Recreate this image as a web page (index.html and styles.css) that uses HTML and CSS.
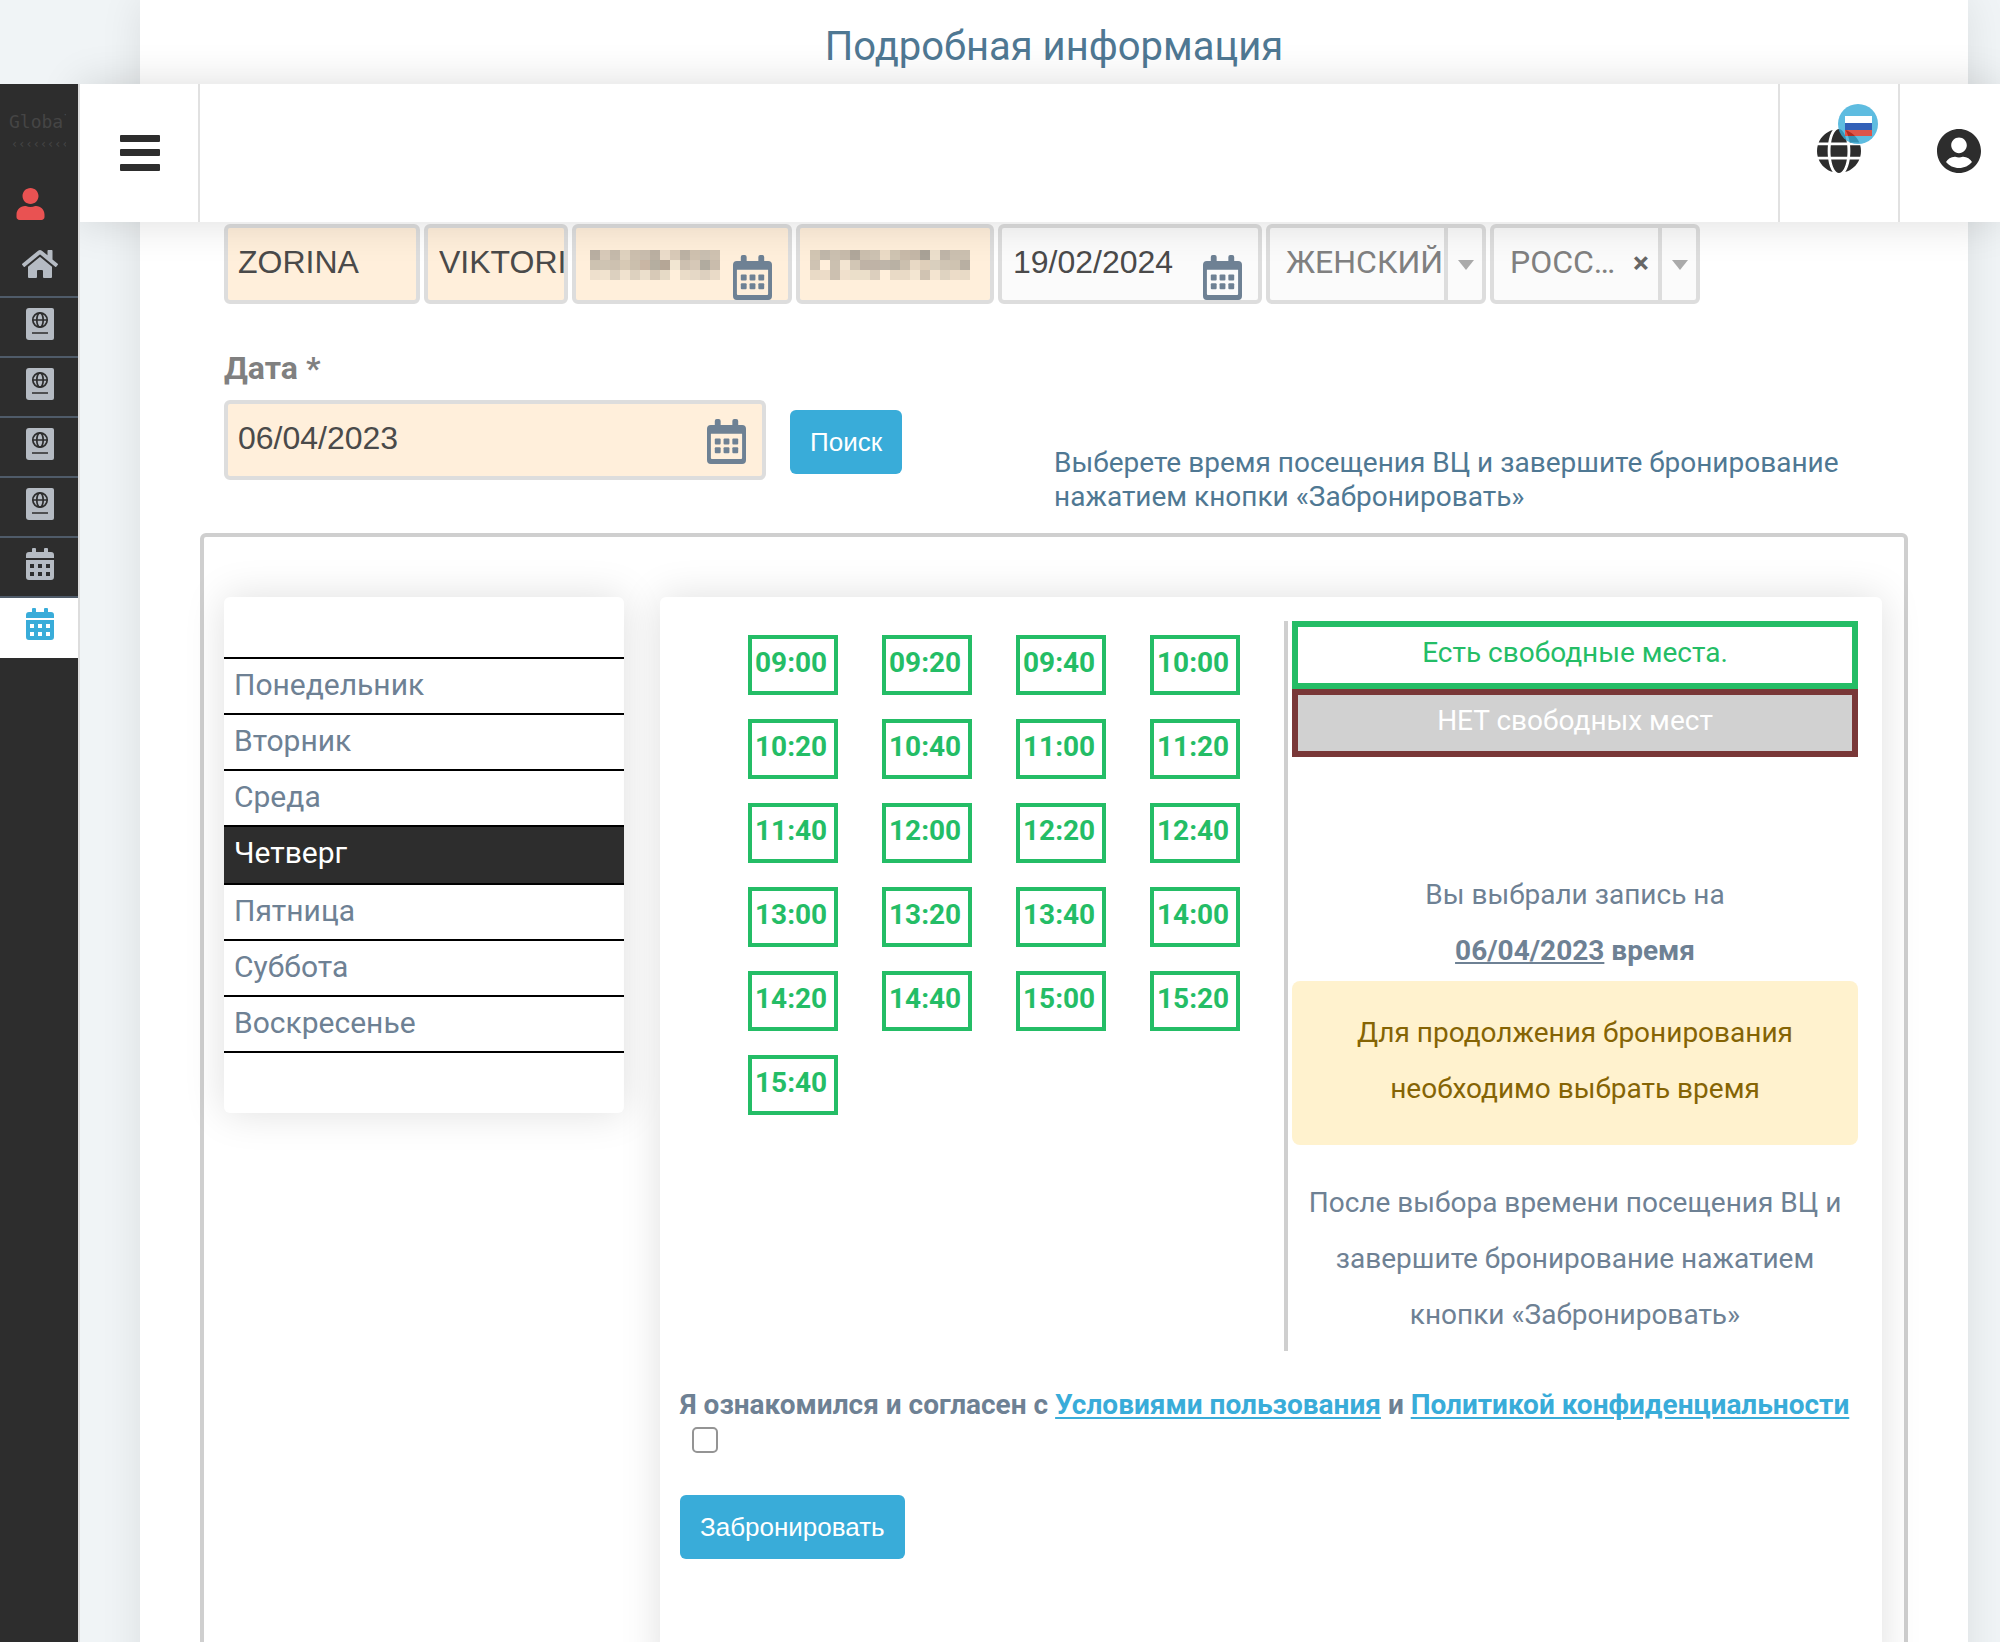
FILE: index.html
```html
<!DOCTYPE html>
<html lang="ru">
<head>
<meta charset="utf-8">
<title>Подробная информация</title>
<meta name="viewport" content="width=device-width, initial-scale=1">
<link rel="stylesheet" href="styles.css">
</head>
<body>
<svg class="sprite" aria-hidden="true">
  <symbol id="passport" viewBox="0 0 28 32">
    <path fill="currentColor" d="M3 0h23a2 2 0 0 1 2 2v28a2 2 0 0 1-2 2H3a3 3 0 0 1-3-3V3a3 3 0 0 1 3-3z"/>
    <g fill="none" stroke="#2d2d2d" stroke-width="1.7"><circle cx="14" cy="12" r="7.2"/><ellipse cx="14" cy="12" rx="3.2" ry="7.2"/><path d="M7 12h14M6 25h16"/></g>
  </symbol>
  <symbol id="calendar" viewBox="0 0 28 32">
    <path fill="currentColor" fill-rule="evenodd" d="M0 10V7a3 3 0 0 1 3-3h3V1a1 1 0 0 1 1-1h2a1 1 0 0 1 1 1v3h8V1a1 1 0 0 1 1-1h2a1 1 0 0 1 1 1v3h3a3 3 0 0 1 3 3v3zM0 12h28v17a3 3 0 0 1-3 3H3a3 3 0 0 1-3-3zM4 16v4h4v-4zM12 16v4h4v-4zM20 16v4h4v-4zM4 24v4h4v-4zM12 24v4h4v-4zM20 24v4h4v-4z"/>
  </symbol>
  <symbol id="picker" viewBox="0 0 40 46">
    <path fill="currentColor" fill-rule="evenodd" d="M4 6h4V2a2 2 0 0 1 2-2h2a2 2 0 0 1 2 2v4h12V2a2 2 0 0 1 2-2h2a2 2 0 0 1 2 2v4h4a4 4 0 0 1 4 4v32a4 4 0 0 1-4 4H4a4 4 0 0 1-4-4V10a4 4 0 0 1 4-4zM4 15v25a1 1 0 0 0 1 1h30a1 1 0 0 0 1-1V15z"/>
    <g fill="currentColor"><rect x="8" y="20" width="6" height="6" rx="1"/><rect x="17" y="20" width="6" height="6" rx="1"/><rect x="26" y="20" width="6" height="6" rx="1"/><rect x="8" y="29" width="6" height="6" rx="1"/><rect x="17" y="29" width="6" height="6" rx="1"/><rect x="26" y="29" width="6" height="6" rx="1"/></g>
  </symbol>
</svg>

<div class="shell">
  <main class="card">
    <h1 class="title">Подробная информация</h1>

    <form class="body">
      <div class="fields">
        <input class="input filled" aria-label="Фамилия" value="ZORINA">
        <input class="input filled inset" aria-label="Имя" value="VIKTORIIA">
        <div class="control">
          <input class="input filled" aria-label="Дата рождения">
          <span class="hidden-date"></span>
          <svg class="pick"><use href="#picker"/></svg>
        </div>
        <div class="control">
          <input class="input filled" aria-label="Номер паспорта">
          <span class="hidden-number"></span>
        </div>
        <div class="control">
          <input class="input inset" aria-label="Срок действия" value="19/02/2024">
          <svg class="pick"><use href="#picker"/></svg>
        </div>
        <div class="control">
          <select class="input select" aria-label="Пол"><option>ЖЕНСКИЙ</option></select>
          <span class="arrow"></span>
        </div>
        <div class="control">
          <select class="input select" aria-label="Гражданство"><option>РОСС…</option></select>
          <button class="clear" type="button" aria-label="Очистить">×</button>
          <span class="arrow"></span>
        </div>
      </div>

      <div class="search">
        <div class="date">
          <label class="date-label" for="date">Дата *</label>
          <div class="control">
            <input class="input filled" id="date" value="06/04/2023">
            <svg class="pick centered"><use href="#picker"/></svg>
          </div>
        </div>
        <button class="button search-button" type="button">Поиск</button>
        <p class="hint">Выберете время посещения ВЦ и завершите бронирование нажатием кнопки «Забронировать»</p>
      </div>

      <section class="schedule">
        <ul class="days">
          <li>Понедельник</li>
          <li>Вторник</li>
          <li>Среда</li>
          <li class="active">Четверг</li>
          <li>Пятница</li>
          <li>Суббота</li>
          <li>Воскресенье</li>
        </ul>

        <div class="panel">
          <div class="booking">
            <div class="slots">
              <button type="button">09:00</button><button type="button">09:20</button><button type="button">09:40</button><button type="button">10:00</button>
              <button type="button">10:20</button><button type="button">10:40</button><button type="button">11:00</button><button type="button">11:20</button>
              <button type="button">11:40</button><button type="button">12:00</button><button type="button">12:20</button><button type="button">12:40</button>
              <button type="button">13:00</button><button type="button">13:20</button><button type="button">13:40</button><button type="button">14:00</button>
              <button type="button">14:20</button><button type="button">14:40</button><button type="button">15:00</button><button type="button">15:20</button>
              <button type="button">15:40</button>
            </div>
            <div class="summary">
              <div class="legend free">Есть свободные места.</div>
              <div class="legend busy">НЕТ свободных мест</div>
              <p class="chosen">Вы выбрали запись на<br><b><u>06/04/2023</u> время</b></p>
              <div class="alert">Для продолжения бронирования необходимо выбрать время</div>
              <p class="after">После выбора времени посещения ВЦ и завершите бронирование нажатием кнопки «Забронировать»</p>
            </div>
          </div>
          <div class="agree">
            <label for="agree">Я ознакомился и согласен с <a href="#terms">Условиями пользования</a> и <a href="#privacy">Политикой конфиденциальности</a></label>
            <input type="checkbox" id="agree">
          </div>
          <button class="button" type="button">Забронировать</button>
        </div>
      </section>
    </form>
  </main>

  <header class="topbar">
    <button class="cell menu" type="button" aria-label="Меню">
      <svg width="40" height="36" viewBox="0 0 40 36"><g fill="#2d2d2d"><rect y="0" width="40" height="7" rx="1"/><rect y="14" width="40" height="7" rx="1"/><rect y="29" width="40" height="7" rx="1"/></g></svg>
    </button>
    <button class="cell language" type="button" aria-label="Язык">
      <svg width="44" height="46" viewBox="0 0 496 512"><path fill="#2d2d2d" d="M336.5 160C322 70.7 287.8 8 248 8s-74 62.7-88.5 152h177zM152 256c0 22.2 1.2 43.5 3.3 64h185.3c2.1-20.5 3.3-41.8 3.3-64s-1.2-43.5-3.3-64H155.3c-2.1 20.5-3.3 41.8-3.3 64zm324.7-96c-28.6-67.9-86.5-120.4-158-141.6 24.4 33.8 41.2 84.7 50 141.6h108zM177.2 18.4C105.8 39.6 47.8 92.1 19.3 160h108c8.7-56.9 25.5-107.8 49.9-141.6zM487.4 192H372.7c2.1 21 3.3 42.5 3.3 64s-1.2 43-3.3 64h114.6c5.5-20.5 8.6-41.8 8.6-64s-3.1-43.5-8.5-64zM120 256c0-21.5 1.2-43 3.3-64H8.6C3.2 212.5 0 233.8 0 256s3.2 43.5 8.6 64h114.6c-2-21-3.2-42.5-3.2-64zm39.5 96c14.5 89.3 48.7 152 88.5 152s74-62.7 88.5-152h-177zm159.3 141.6c71.4-21.2 129.4-73.7 158-141.6h-108c-8.8 56.9-25.6 107.8-50 141.6zM19.3 352c28.6 67.9 86.5 120.4 158 141.6-24.4-33.8-41.2-84.7-50-141.6h-108z"/></svg>
      <svg class="badge" width="40" height="40" viewBox="0 0 40 40"><circle cx="20" cy="20" r="20" fill="#36acd9"/><path fill="#fff" d="M7 12h27v7H7z"/><path fill="#0039a6" d="M7 19h27v7H7z"/><path fill="#d52b1e" d="M7 26h27v6H7z"/></svg>
    </button>
    <button class="cell account" type="button" aria-label="Профиль">
      <svg width="44" height="46" viewBox="0 0 496 512"><path fill="#2d2d2d" d="M248 8C111 8 0 119 0 256s111 248 248 248 248-111 248-248S385 8 248 8zm0 96c48.6 0 88 39.4 88 88s-39.4 88-88 88-88-39.4-88-88 39.4-88 88-88zm0 344c-58.7 0-111.3-26.6-146.5-68.2 18.8-35.4 55.6-59.8 98.5-59.8 2.4 0 4.8.4 7.1 1.1 13 4.2 26.6 6.9 40.9 6.9 14.3 0 28-2.7 40.9-6.9 2.3-.7 4.7-1.1 7.1-1.1 42.9 0 79.7 24.4 98.5 59.8C359.3 421.4 306.7 448 248 448z"/></svg>
    </button>
  </header>

  <nav class="sidebar">
    <div class="logo"><span>Global</span><span class="chevrons">‹‹‹‹‹‹‹‹</span></div>
    <a class="user" href="#user" aria-label="Пользователь"><svg width="29" height="32" viewBox="0 0 448 512"><path fill="#e95252" d="M224 256c70.7 0 128-57.3 128-128S294.7 0 224 0 96 57.3 96 128s57.3 128 128 128zm89.6 32h-16.7c-22.2 10.2-46.9 16-72.9 16s-50.6-5.8-72.9-16h-16.7C60.2 288 0 348.2 0 422.4V464c0 26.5 21.5 48 48 48h352c26.5 0 48-21.5 48-48v-41.6c0-74.2-60.2-134.4-134.4-134.4z"/></svg></a>
    <a class="item" href="#home" aria-label="Главная"><svg width="36" height="32" viewBox="0 0 576 512"><path fill="currentColor" d="M280.37 148.26L96 300.11V464a16 16 0 0 0 16 16l112.06-.29a16 16 0 0 0 15.92-16V368a16 16 0 0 1 16-16h64a16 16 0 0 1 16 16v95.64a16 16 0 0 0 16 16.05L464 480a16 16 0 0 0 16-16V300L295.67 148.26a12.19 12.19 0 0 0-15.3 0zM571.6 251.47L488 182.56V44.05a12 12 0 0 0-12-12h-56a12 12 0 0 0-12 12v72.61L318.47 43a48 48 0 0 0-61 0L4.34 251.47a12 12 0 0 0-1.6 16.9l25.5 31A12 12 0 0 0 45.15 301l235.22-193.74a12.19 12.19 0 0 1 15.3 0L530.9 301a12 12 0 0 0 16.9-1.6l25.5-31a12 12 0 0 0-1.7-16.93z"/></svg></a>
    <a class="item" href="#p1" aria-label="Паспорт"><svg width="28" height="32"><use href="#passport"/></svg></a>
    <a class="item" href="#p2" aria-label="Паспорт"><svg width="28" height="32"><use href="#passport"/></svg></a>
    <a class="item" href="#p3" aria-label="Паспорт"><svg width="28" height="32"><use href="#passport"/></svg></a>
    <a class="item" href="#p4" aria-label="Паспорт"><svg width="28" height="32"><use href="#passport"/></svg></a>
    <a class="item" href="#c1" aria-label="Календарь"><svg width="28" height="32"><use href="#calendar"/></svg></a>
    <a class="item current" href="#c2" aria-label="Бронирование"><svg width="28" height="32"><use href="#calendar"/></svg></a>
  </nav>
</div>
</body>
</html>
```
FILE: styles.css
```css
* { box-sizing: border-box; }
body { margin: 0; background: #f0f4f6; font: 28px/34px Roboto, "Open Sans", sans-serif; color: #6e8194; }
p, h1, ul { margin: 0; padding: 0; font-weight: 400; }
button { font: inherit; cursor: pointer; }
svg { display: block; }
.sprite { position: absolute; width: 0; height: 0; }

/* Frame: card behind, bar and sidebar stacked above it */
.shell { display: grid; grid-template: 84px 138px auto / 80px minmax(0, 1fr); height: 100vh; overflow: hidden; }
.card { grid-area: 1 / 2 / 4 / 3; margin: 0 32px 0 60px; background: #fff; box-shadow: 0 0 40px rgba(0, 0, 0, .09); }
.topbar { grid-area: 2 / 2 / 3 / 3; z-index: 1; display: flex; background: #fff; box-shadow: 0 0 40px rgba(0, 0, 0, .14); }
.sidebar { grid-area: 2 / 1 / 4 / 2; z-index: 2; background: #2d2d2d; border-right: 2px solid #ddd; }

.cell { display: flex; align-items: center; justify-content: center; width: 120px; padding: 0; border: 0 solid #e1e1e1; background: none; }
.menu { padding: 0 0 0 2px; border-right-width: 2px; }
.language, .account { position: relative; border-left-width: 2px; padding-bottom: 4px; }
.language { margin-left: auto; }
.account { width: 102px; padding-left: 18px; }
.badge { position: absolute; top: 20px; right: 20px; opacity: .8; }

.logo { display: flex; flex-direction: column; height: 104px; margin: 0 12px 0 9px; padding-top: 27px; overflow: hidden; font: 18px/22px "DejaVu Sans Mono", monospace; color: #454545; }
.chevrons { padding-left: 2px; font-size: 12px; }
.user { display: flex; padding: 0 16px; }
.item { display: flex; height: 60px; padding: 10px 0 0 26px; border-bottom: 2px solid #4f5b69; color: #b5bbc3; }
.user + .item { height: 78px; padding: 28px 0 0 22px; }
.current { border: 0; background: #fff; color: #39acd9; }

/* Form */
.title { padding-top: 22px; height: 222px; font-size: 40px; line-height: 50px; text-align: center; color: #4f7893; }
.body { padding: 2px 60px 0; }
.fields { display: grid; grid-template-columns: 196px 144px 220px 198px 264px 220px 210px; gap: 4px; padding-left: 24px; }
.control { position: relative; }
.input { display: block; width: 100%; height: 80px; margin: 0; padding: 0 0 4px 10px; border: 4px solid #ddd; border-radius: 6px; background: #fbfbfb; font: 32px/38px "Liberation Sans", Arial, sans-serif; color: #4a4a4a; appearance: none; }
.filled { background: #ffefdb; }
.inset { padding-left: 11px; }
.pick { position: absolute; right: 20px; bottom: 4px; width: 39px; height: 45px; color: #6e8194; }
.centered { bottom: 16px; }
.select { padding: 0 40px 4px 16px; font-family: Roboto, sans-serif; color: #808080; }
.arrow { position: absolute; top: 4px; right: 4px; bottom: 4px; width: 38px; border-left: 4px solid #ddd; pointer-events: none; }
.arrow::after { content: ""; position: absolute; top: 32px; left: 10px; border: 8px solid transparent; border-top: 10px solid #aaa; border-bottom: 0; }
.clear { position: absolute; top: 20px; right: 51px; padding: 0; border: 0; background: none; font: bold 30px/38px Roboto, sans-serif; color: #666; }
.hidden-date, .hidden-number { position: absolute; top: 26px; left: 18px; width: 130px; height: 30px; background-repeat: no-repeat; background-size: 100% 10px; background-position: 0 0, 0 10px, 0 20px; }
.hidden-date { background-image:
  linear-gradient(90deg, #b9afa2 10px, #d8cab9 0 20px, #c5baab 0 30px, #dfd2bf 0 40px, #ccbfae 0 50px, #c9bdae 0 60px, #bbb0a2 0 70px, #ebdcca 0 80px, #d9cab8 0 90px, #bcb2a4 0 100px, #cfc1af 0 110px, #c9bfb1 0 120px, #cfc2b1 0),
  linear-gradient(90deg, #cdc2b1 10px, #cfc4b3 0 20px, #cdc1b0 0 30px, #d7c9b5 0 40px, #cbbfad 0 50px, #c9b6a4 0 60px, #b5aea0 0 70px, #b5a696 0 80px, #f1e6d2 0 90px, #cdc0b0 0 100px, #d6c8b7 0 110px, #b1ab9f 0 120px, #c9bcac 0),
  linear-gradient(90deg, #eee0cd 10px, #f1e3cf 0 20px, #dcd0bf 0 30px, #f0e2cf 0 40px, #ddd1bf 0 50px, #ebdfcc 0 60px, #d7c9b7 0 70px, #e6dac6 0 80px, #ffefdb 0 90px, #eadcc8 0 100px, #e5d8c6 0 110px, #ddd0bf 0 120px, #e9dac7 0); }
.hidden-number { left: 14px; width: 160px; background-image:
  linear-gradient(90deg, #d2c6b3 10px, #c0b7aa 0 20px, #cbc0b0 0 30px, #c7bbab 0 40px, #b0a79b 0 50px, #cbbfae 0 60px, #cdc2b2 0 70px, #ebdbc6 0 80px, #cfc4b2 0 90px, #c8baa9 0 100px, #c4b7a7 0 110px, #a9a297 0 120px, #ecdfcc 0 130px, #bfb5a8 0 140px, #cbc0b0 0),
  linear-gradient(90deg, #cfc3b3 10px, #ffefdb 0 20px, #cbc0b0 0 30px, #f3e5d2 0 40px, #d2c6b5 0 50px, #bfb3a6 0 70px, #beb5a9 0 80px, #b9b1a4 0 90px, #cbbfae 0 100px, #e8d9c5 0 110px, #dfcfba 0 120px, #d9cfbe 0 130px, #d0c5b4 0 140px, #cfc3b1 0 150px, #b8afa2 0),
  linear-gradient(90deg, #e9dac6 10px, #ecdcc8 0 20px, #ccc0b0 0 30px, #f0e0cc 0 40px, #ebdfca 0 60px, #dccfbe 0 70px, #ffefdb 0 80px, #e9dac6 0 100px, #f3e6d2 0 110px, #d0c3b2 0 120px, #f3e4d0 0 130px, #dfd3c1 0 140px, #ecdcc8 0 150px, #e8dac6 0); }

.search { display: flex; align-items: flex-start; gap: 24px; margin-top: 44px; padding-left: 24px; }
.date { width: 542px; }
.date-label { display: block; margin-bottom: 12px; font-size: 32px; font-weight: 700; line-height: 40px; color: #808080; }
.button { height: 64px; padding: 0 20px; border: 0; border-radius: 6px; background: #39acd9; color: #fff; font: 26px/30px "Liberation Sans", Arial, sans-serif; }
.search-button { margin-top: 62px; }
.hint { flex: 1; margin: 98px 0 0 128px; color: #4f7893; }

/* Schedule */
.schedule { display: flex; align-items: flex-start; gap: 36px; margin-top: 19px; padding: 60px 22px 60px 20px; border: 4px solid #cfcfcf; border-radius: 6px; }
.days { flex: none; width: 400px; padding: 60px 0; border-radius: 6px; background: #fff; box-shadow: 0 0 40px rgba(0, 0, 0, .13); list-style: none; font-size: 30px; line-height: 52px; }
.days li { padding: 0 10px 2px; border-top: 2px solid #000; }
.days .active { height: 58px; background: #2d2d2d; color: #fff; }
.days li:last-child { border-bottom: 2px solid #000; }
.panel { flex: 1; min-width: 0; padding: 24px 24px 120px 20px; border-radius: 6px; background: #fff; box-shadow: 0 0 40px rgba(0, 0, 0, .13); }
.booking { display: flex; }
.slots { flex: 1; display: grid; grid-template-columns: repeat(4, 90px); gap: 24px 44px; align-content: start; padding: 14px 0 0 68px; }
.slots button { height: 60px; padding: 0 3px 4px; border: 4px solid #24bd66; background: #fff; color: #24bd66; font-weight: 700; text-align: left; }
.summary { width: 574px; padding: 0 0 8px 4px; border-left: 4px solid #cfcfcf; text-align: center; line-height: 56px; }
.legend { height: 68px; border: 6px solid #24bd66; line-height: 52px; color: #24bd66; }
.busy { border-color: #793737; background: #d1d1d1; color: #fff; }
.chosen { margin-top: 110px; }
.alert { margin: 2px 0 30px; padding: 24px 40px 28px; border-radius: 8px; background: #fff2ce; color: #856404; }
.agree { margin: 37px -10px 42px 0; }
.agree label { display: block; font-weight: 700; line-height: 34px; }
.agree a { color: #39acd9; text-underline-offset: 3px; }
.agree input { display: block; width: 26px; height: 26px; margin: 5px 12px 0; border: 2px solid #949494; border-radius: 5px; background: #fff; appearance: none; }
.agree input:checked { background: #39acd9; }
```
